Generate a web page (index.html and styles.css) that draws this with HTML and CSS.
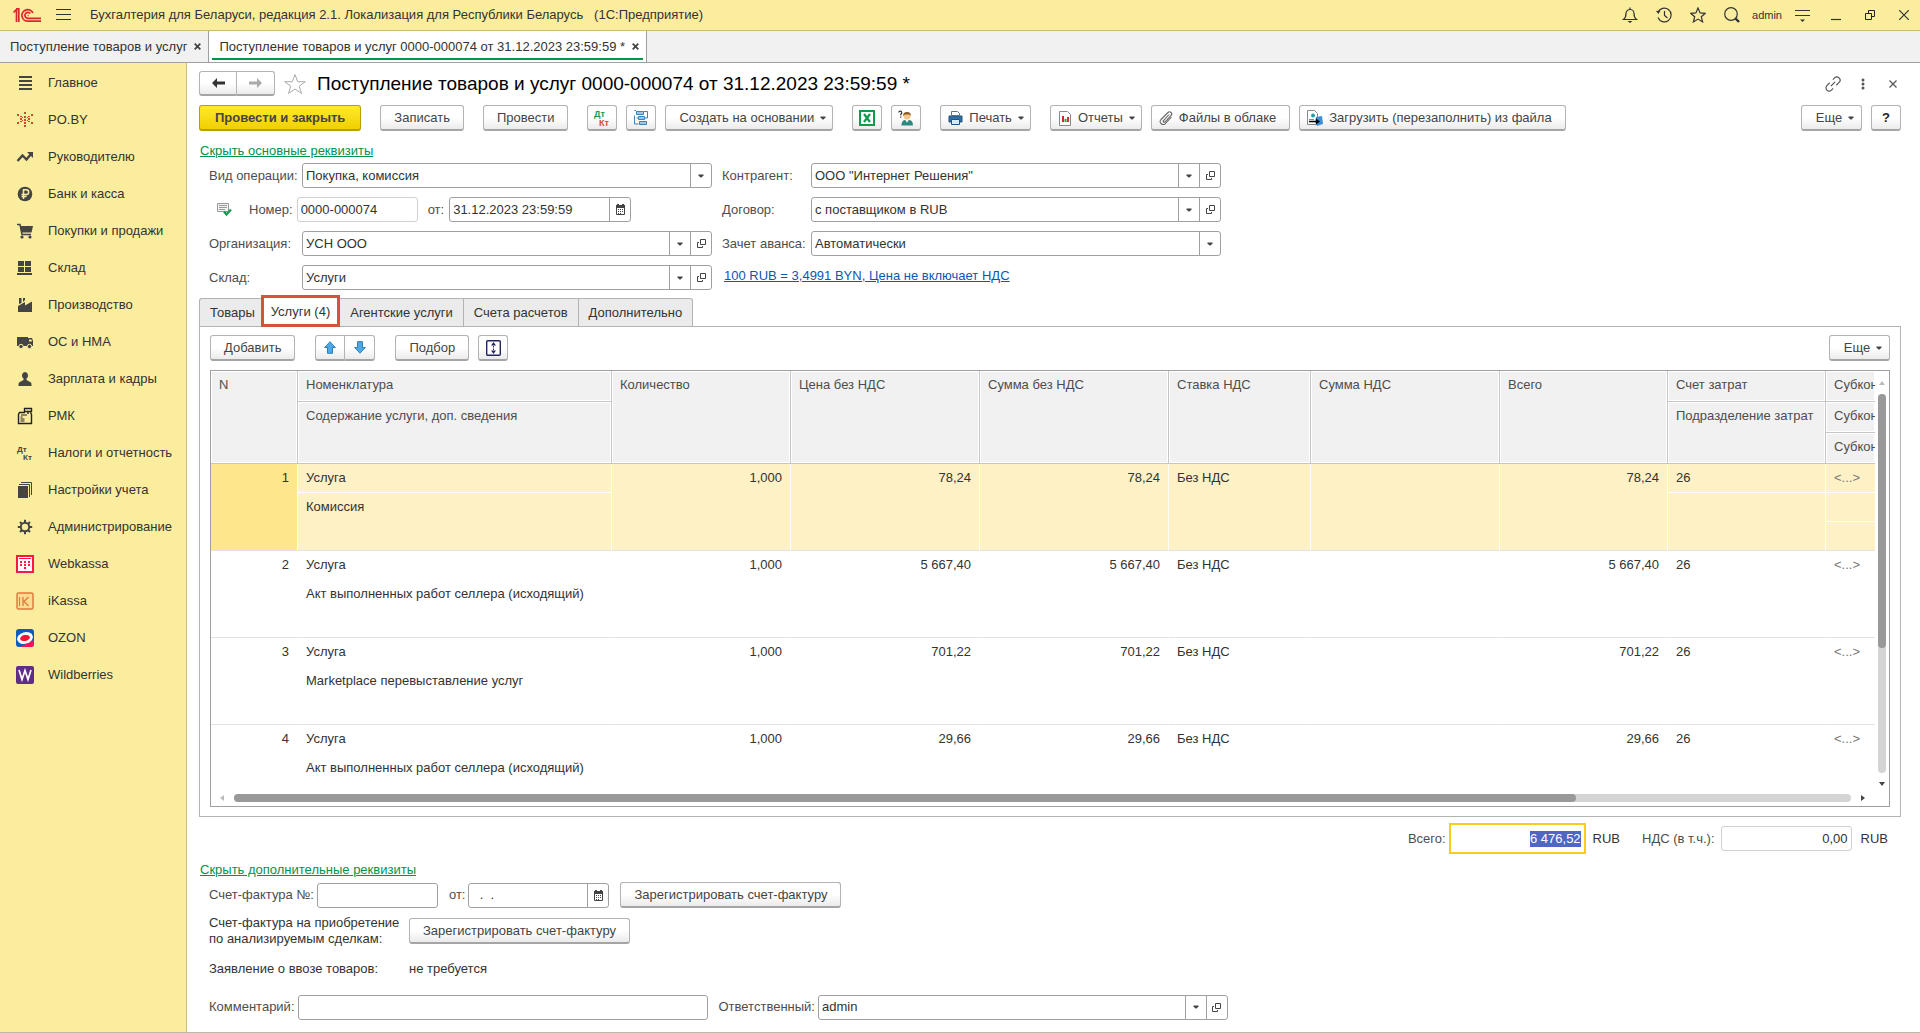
FILE: index.html
```html
<!DOCTYPE html>
<html lang="ru">
<head>
<meta charset="utf-8">
<title>Поступление товаров и услуг 0000-000074</title>
<link rel="stylesheet" href="styles.css">
</head>
<body>
<svg class="defs" width="0" height="0" aria-hidden="true">
  <symbol id="caret" viewBox="0 0 6 4"><path d="M.5.500h5v1L3.500 3.500h-1L.5 1.500z" fill="#444"/></symbol>
  <symbol id="open" viewBox="0 0 9 9"><path d="M3.500.5h5v5h-5zM2 3.500H.5v5h5V7" fill="none" stroke="#444"/></symbol>
  <symbol id="calendar" viewBox="0 0 9 11"><path d="M.5 2.500h8v8h-8z" fill="#fff" stroke="#444"/><path d="M0 1h9v3H0zM1 0h2v1H1zM6 0h2v1H6zM2 5h1v1H2zM4 5h1v1H4zM6 5h1v1H6zM2 7h1v1H2zM4 7h1v1H4zM6 7h1v1H6zM2 9h1v1H2zM4 9h1v1H4z" fill="#444"/></symbol>
  <symbol id="cross" viewBox="0 0 7 7"><path d="M.7.7l5.600 5.600M6.300.7L.7 6.300" stroke="#444" stroke-width="1.800"/></symbol>
</svg>

<header class="titlebar">
  <svg class="logo" width="28" height="15" viewBox="0 0 28 15" fill="none" stroke="#d9262e" stroke-width="1.700"><path d="M.5 4.500L3.500 1.500V14M5.800 14V.9L3 .9M20 5A5.800 5.800 0 1 0 14.500 13.200H28M17.300 5.500A3 3 0 1 0 14.500 10.300H28M14.600 7.500h1"/></svg>
  <button class="flat" aria-label="Меню"><svg width="15" height="12" viewBox="0 0 15 12"><path d="M0 .5h15M0 5.500h15M0 10.500h15" stroke="#333"/></svg></button>
  <span class="app-name">Бухгалтерия для Беларуси, редакция 2.1. Локализация для Республики Беларусь &nbsp; (1С:Предприятие)</span>
  <div class="sys">
    <button class="flat" aria-label="Уведомления"><svg width="16" height="16" viewBox="0 0 16 16" fill="none" stroke="#333" stroke-width="1.200"><path d="M1.500 12.500c2-1.500 2.500-3 2.500-6a4 4 0 0 1 8 0c0 3 .5 4.500 2.500 6zM8 2.500V.5"/><path d="M5.500 14h5L8 16z" fill="#333" stroke="none"/></svg></button>
    <button class="flat" aria-label="История"><svg width="16" height="16" viewBox="0 0 16 16" fill="none" stroke="#333" stroke-width="1.200"><path d="M2 5.500a6.800 6.800 0 1 1 0 5M8.500 4v4.500l3 2.500"/><path d="M0 4l4.500-.5L2.500 7z" fill="#333" stroke="none"/></svg></button>
    <button class="flat" aria-label="Избранное"><svg width="16" height="16" viewBox="0 0 16 16" fill="none" stroke="#333" stroke-width="1.200"><path d="M8 1l2.100 4.900 5.200.4-4 3.400 1.300 5.200L8 12.100l-4.600 2.800 1.300-5.200-4-3.400 5.200-.4z"/></svg></button>
    <button class="flat" aria-label="Поиск"><svg width="16" height="16" viewBox="0 0 16 16" fill="none" stroke="#333"><circle cx="7" cy="7" r="6.300" stroke-width="1.200"/><path d="M11.500 11.500l3.500 3.500" stroke-width="2.400"/></svg></button>
    <span class="user">admin</span>
    <button class="flat" aria-label="Настройки"><svg width="15" height="13" viewBox="0 0 15 13"><path d="M0 1.500h15M0 6.500h15" stroke="#333" stroke-width="1.200"/><path d="M5 10.500h5L7.500 13z" fill="#333"/></svg></button>
    <button class="flat" aria-label="Свернуть"><svg width="10" height="12" viewBox="0 0 10 12"><path d="M0 10.500h10" stroke="#333" stroke-width="1.200"/></svg></button>
    <button class="flat" aria-label="Восстановить"><svg width="10" height="10" viewBox="0 0 10 10" fill="none" stroke="#222"><path d="M.5 3.500h6v6h-6zM3.500 3V.5h6v6H7"/></svg></button>
    <button class="flat" aria-label="Закрыть"><svg width="10" height="10" viewBox="0 0 10 10"><path d="M0 0l10 10M10 0L0 10" stroke="#333" stroke-width="1.200"/></svg></button>
  </div>
</header>

<nav class="windows">
  <div class="win"><a href="#list">Поступление товаров и услуг</a><button class="flat" aria-label="Закрыть вкладку"><svg width="7" height="7"><use href="#cross"/></svg></button></div>
  <div class="win current"><a href="#doc">Поступление товаров и услуг 0000-000074 от 31.12.2023 23:59:59 *</a><button class="flat" aria-label="Закрыть вкладку"><svg width="7" height="7"><use href="#cross"/></svg></button></div>
</nav>

<div class="workspace">
  <nav class="sidebar">
    <a href="#main"><svg width="18" height="18" viewBox="0 0 18 18"><path d="M3 3h13M3 7h13M3 11h13M3 15h13" stroke="#444" stroke-width="2"/></svg>Главное</a>
    <a href="#po"><svg width="18" height="18" viewBox="0 0 18 18" fill="#d9442f"><path d="M8 1h2v2H8zM8 5h2v2H8zM8 8h2v2H8zM8 11h2v2H8zM8 14h2v2H8zM1 3h2v2H1zM15 3h2v2h-2zM1 11h2v2H1zM15 11h2v2h-2zM4 5h2v1H4zM12 5h2v1h-2zM4 7h2v2H4zM12 7h2v2h-2zM4 10h2v1H4zM12 10h2v1h-2zM6 6h1v1H6zM11 6h1v1h-1zM6 9h1v1H6zM11 9h1v1h-1z"/></svg>PO.BY</a>
    <a href="#head"><svg width="18" height="18" viewBox="0 0 18 18"><path d="M1.500 13l5-5.500 4 4L15 6" fill="none" stroke="#444" stroke-width="2.400"/><path d="M11 4h6v6z" fill="#444"/></svg>Руководителю</a>
    <a href="#bank"><svg width="18" height="18" viewBox="0 0 18 18"><circle cx="9" cy="9" r="7.300" fill="#444"/><path d="M7.500 14V4.800h2.800a2.300 2.300 0 0 1 0 4.700H5.500M5.500 11.500h5" fill="none" stroke="#fbed9e" stroke-width="1.500"/></svg>Банк и касса</a>
    <a href="#buy"><svg width="18" height="18" viewBox="0 0 18 18"><path d="M1 2.500h3l2 10h9" fill="none" stroke="#444" stroke-width="1.500"/><path d="M4 4h13l-1.500 6.500H5.500z" fill="#444"/><circle cx="6" cy="15" r="1.600" fill="#444"/><circle cx="14" cy="15" r="1.600" fill="#444"/></svg>Покупки и продажи</a>
    <a href="#store"><svg width="18" height="18" viewBox="0 0 18 18" fill="#444"><path d="M2 2h6v5H2zM9 2h6v5H9zM2 8h6v5H2zM9 8h6v5H9zM1 14h15v2H1z"/></svg>Склад</a>
    <a href="#prod"><svg width="18" height="18" viewBox="0 0 18 18" fill="#444"><path d="M2 16v-6l7-4v3.500l7-4V16zM3 2h2.500v5L3 8zM7 2h2v2L7 6z"/></svg>Производство</a>
    <a href="#os"><svg width="18" height="18" viewBox="0 0 18 18" fill="#444"><path d="M1 4h11v9H1zM12 5h4l1 3v5h-5z"/><path d="M13 6.500h2.500l.5 2h-3z" fill="#fbed9e"/><circle cx="5" cy="13.500" r="2.200" stroke="#fbed9e"/><circle cx="13.500" cy="13.500" r="2.200" stroke="#fbed9e"/></svg>ОС и НМА</a>
    <a href="#salary"><svg width="18" height="18" viewBox="0 0 18 18" fill="#444"><path d="M9 2a3.200 3.500 0 0 1 1.500 6.500v1.500l4.500 2.500c.5 1 .5 2 .5 3.500h-13c0-1.500 0-2.500.5-3.500L7.500 10V8.500A3.200 3.500 0 0 1 9 2z"/></svg>Зарплата и кадры</a>
    <a href="#rmk"><svg width="18" height="18" viewBox="0 0 18 18" fill="none" stroke="#222" stroke-width="1.400"><path d="M9 5.500H3.500l-1 2v9h13V7.500l-1-2M8.500 1.500h7v3h-7zM12 4v3"/><path d="M4.500 10h2M4.500 12h4M4.500 14h4M5 8h6" stroke-width="1.200"/></svg>РМК</a>
    <a href="#tax"><svg width="18" height="18" viewBox="0 0 18 18" fill="#444" font-family="Liberation Sans, sans-serif" font-weight="bold" font-size="8"><text x="1" y="8">Дт</text><text x="7" y="16">Кт</text></svg>Налоги и отчетность</a>
    <a href="#setup"><svg width="18" height="18" viewBox="0 0 18 18"><path d="M2 5h10v12H2z" fill="#444"/><path d="M3 3.500h10.500V16M5 1.500h10.500V14" fill="none" stroke="#444"/></svg>Настройки учета</a>
    <a href="#admin"><svg width="18" height="18" viewBox="0 0 18 18" fill="none" stroke="#444"><circle cx="9" cy="9" r="4.200" stroke-width="2"/><path d="M9 1.800v3M9 13.200v3M1.800 9h3M13.200 9h3M4 4l2 2M12 12l2 2M14 4l-2 2M6 12l-2 2" stroke-width="2"/></svg>Администрирование</a>
    <a href="#webkassa"><svg width="18" height="18" viewBox="0 0 18 18"><rect x="1" y="1" width="16" height="16" fill="#fff" stroke="#ff1744" stroke-width="2"/><path d="M3 3h12v1H3zM4 6h2v2H4zM8 6h2v2H8zM12 6h2v2h-2zM4 9h2v2H4zM8 9h2v2H8zM12 9h2v2h-2zM8 12h2v2H8z" fill="#ff1744"/></svg>Webkassa</a>
    <a href="#ikassa"><svg width="18" height="18" viewBox="0 0 18 18" fill="none" stroke="#e07b3c"><rect x="1" y="1" width="16" height="16" rx="1.500" fill="#fbdc90" stroke-width="1.500"/><path d="M3.500 5v9" stroke-width="1"/><path d="M7 5v9M12.500 5L8 9.500l4.500 4.500" stroke-width="1.300"/></svg>iKassa</a>
    <a href="#ozon"><svg width="18" height="18" viewBox="0 0 18 18"><rect width="18" height="18" rx="3" fill="#0b5cc0"/><path d="M18 11v4a3 3 0 0 1-3 3H4z" fill="#f91155"/><ellipse cx="9" cy="9" rx="8" ry="5.800" fill="#fff" transform="rotate(-15 9 9)"/><ellipse cx="9" cy="9" rx="5" ry="3" fill="#f91136" transform="rotate(-12 9 9)"/></svg>OZON</a>
    <a href="#wb"><svg width="18" height="18" viewBox="0 0 18 18"><rect width="18" height="18" rx="2" fill="#5f2c86"/><path d="M3 4l3 9.500L9 4.500l3 9L15 4" fill="none" stroke="#fff" stroke-width="1.700"/></svg>Wildberries</a>
  </nav>

  <main class="doc">
    <div class="doc-head">
      <div class="group">
        <button class="btn half" aria-label="Назад"><svg width="13" height="10" viewBox="0 0 13 10"><path d="M0 5l5-5v3.500h8v3H5V10z" fill="#333"/></svg></button><button class="btn half" aria-label="Вперед"><svg width="13" height="10" viewBox="0 0 13 10"><path d="M13 5L8 0v3.500H0v3h8V10z" fill="#aaa"/></svg></button>
      </div>
      <button class="flat" aria-label="В избранное"><svg width="24" height="22" viewBox="0 0 24 22"><path d="M12 1.500l2.700 7.200h7.600l-6.100 4.500 2.300 7.200-6.500-4.400-6.500 4.400 2.300-7.200-6.100-4.500h7.600z" fill="#fff" stroke="#aaa"/></svg></button>
      <h1>Поступление товаров и услуг 0000-000074 от 31.12.2023 23:59:59 *</h1>
      <div class="head-tools">
        <button class="flat" aria-label="Ссылка"><svg width="16" height="16" viewBox="0 0 16 16" fill="none" stroke="#555" stroke-width="1.200"><g transform="rotate(-45 8 8)"><path d="M6.500 4.800H2.600a3.200 3.200 0 0 0 0 6.400H5M9.500 11.200h3.900a3.200 3.200 0 0 0 0-6.400H11M5 8h6"/></g></svg></button>
        <button class="flat" aria-label="Действия"><svg width="4" height="12" viewBox="0 0 4 12" fill="#555"><circle cx="2" cy="2" r="1.500"/><circle cx="2" cy="6" r="1.500"/><circle cx="2" cy="10" r="1.500"/></svg></button>
        <button class="flat" aria-label="Закрыть"><svg width="8" height="8" viewBox="0 0 8 8"><path d="M.5.5l7 7M7.500.5l-7 7" stroke="#555" stroke-width="1.200"/></svg></button>
      </div>
    </div>

    <div class="toolbar">
      <button class="btn primary">Провести и закрыть</button>
      <button class="btn">Записать</button>
      <button class="btn">Провести</button>
      <div class="cluster">
        <button class="btn square" aria-label="Дебет и кредит"><svg width="18" height="18" viewBox="0 0 18 18" font-family="Liberation Sans, sans-serif" font-weight="bold" font-size="9"><text x="1" y="8" fill="#159a4b">Дт</text><text x="6" y="17" fill="#d2502f">Кт</text></svg></button>
        <button class="btn square" aria-label="Структура подчиненности"><svg width="16" height="16" viewBox="0 0 16 16" fill="#9cc6e4" stroke="#3f82b4"><path d="M3.500 1.500h7v3h-7zM5.500 6.500h6v3h-6zM6.500 11.500h7v3h-7z"/><path d="M3 .5H1.500M11 1.500h3.500v6.500H12M1.500 5.500v8.500h4M3.500 8h2" fill="none"/></svg></button>
        <button class="btn menu">Создать на основании<svg class="caret" width="6" height="4"><use href="#caret"/></svg></button>
      </div>
      <div class="cluster">
        <button class="btn square" aria-label="Excel"><svg width="16" height="16" viewBox="0 0 16 16"><rect x="1" y="1" width="14" height="14" fill="#fff" stroke="#0f9b4c" stroke-width="2"/><path d="M5 4l6 8M11 4l-6 8" stroke="#0f9b4c" stroke-width="2.200"/></svg></button>
        <button class="btn square" aria-label="Помощник"><svg width="16" height="16" viewBox="0 0 16 16"><path d="M.8 2.500a1.500 1.500 0 1 1 2 1.500v1.500M2.800 6.500v1.200" fill="none" stroke="#333" stroke-width="1.200"/><circle cx="9" cy="6" r="3.500" fill="#f3c48b"/><path d="M5 6a4 4 0 0 1 8 0l-1.500-1.500H7z" fill="#8a5a1d"/><path d="M3.500 15.500c0-4 2-5.500 3.500-5.500l2 2 2-2c2 0 4 1.500 4 5.500z" fill="#2d8a80"/><path d="M8 10h2l-1 3z" fill="#fff"/></svg></button>
      </div>
      <button class="btn menu icon"><svg width="15" height="14" viewBox="0 0 15 14"><path d="M1 5h13v6H1z" fill="#2f6ea8" stroke="#23527e"/><path d="M3.500 4.500V.5h6l2 2v2z" fill="#fff" stroke="#5b7388"/><path d="M3.500 8.500h8v5h-8z" fill="#dbe8f3" stroke="#23527e"/></svg>Печать<svg class="caret" width="6" height="4"><use href="#caret"/></svg></button>
      <div class="cluster">
        <button class="btn menu icon"><svg width="14" height="15" viewBox="0 0 14 15"><path d="M1.500.5h8l3 3v11h-11z" fill="#fff" stroke="#888"/><path d="M4 5h2v6H4z" fill="#d22"/><path d="M6.500 8h2v3h-2z" fill="#2a4"/><path d="M9 6h2v5H9z" fill="#c33"/></svg>Отчеты<svg class="caret" width="6" height="4"><use href="#caret"/></svg></button>
        <button class="btn icon"><svg width="14" height="14" viewBox="0 0 14 14" fill="none" stroke="#666" stroke-width="1.100"><path d="M10 3.500L4.500 9.500a1 1 0 0 0 1.500 1.500L12 4.500a2 2 0 0 0-3-3L2 8.500a3 3 0 0 0 4.500 4L12.500 6"/></svg>Файлы в облаке</button>
        <button class="btn icon"><svg width="16" height="16" viewBox="0 0 16 16"><path d="M.5.5h7l3 3v11H.5z" fill="#fff" stroke="#888"/><circle cx="6" cy="5.500" r="2" fill="#1fa0a8"/><path d="M2 9h5v1H2z" fill="#888"/><path d="M9 7l6-1 1 8-6 2-2-4z" fill="#3d8fd6"/><path d="M2 11.500h8" stroke="#000" stroke-width="1.500"/><path d="M9 8.500l4 3-4 3z" fill="#000"/></svg>Загрузить (перезаполнить) из файла</button>
      </div>
      <div class="cluster end">
        <button class="btn menu more">Еще<svg class="caret" width="6" height="4"><use href="#caret"/></svg></button>
        <button class="btn square help">?</button>
      </div>
    </div>

    <a class="toggle" href="#requisites">Скрыть основные реквизиты</a>

    <section class="form">
      <label for="op">Вид операции:</label>
      <div class="field"><select id="op"><option>Покупка, комиссия</option></select><span class="side"><svg width="6" height="4"><use href="#caret"/></svg></span></div>
      <label for="partner" class="second">Контрагент:</label>
      <div class="field"><input id="partner" value="ООО &quot;Интернет Решения&quot;"><button class="side" aria-label="Выбрать"><svg width="6" height="4"><use href="#caret"/></svg></button><button class="side" aria-label="Открыть"><svg width="9" height="9"><use href="#open"/></svg></button></div>

      <div class="number-row">
        <svg width="15" height="13" viewBox="0 0 15 13"><path d="M.5.5h11v8H.5z" fill="#f3f3f3" stroke="#999"/><path d="M2 2.500h8M2 4.500h8M2 6.500h6" stroke="#999"/><path d="M7 8.500l2.500 3L14 6.500" fill="none" stroke="#159a4b" stroke-width="2.200"/></svg>
        <label for="num">Номер:</label>
        <div class="field pale num"><input id="num" value="0000-000074"></div>
        <label for="date">от:</label>
        <div class="field date"><input id="date" value="31.12.2023 23:59:59"><button class="side" aria-label="Календарь"><svg width="9" height="11"><use href="#calendar"/></svg></button></div>
      </div>
      <label for="contract" class="second">Договор:</label>
      <div class="field"><input id="contract" value="с поставщиком в RUB"><button class="side" aria-label="Выбрать"><svg width="6" height="4"><use href="#caret"/></svg></button><button class="side" aria-label="Открыть"><svg width="9" height="9"><use href="#open"/></svg></button></div>

      <label for="org">Организация:</label>
      <div class="field"><input id="org" value="УСН ООО"><button class="side" aria-label="Выбрать"><svg width="6" height="4"><use href="#caret"/></svg></button><button class="side" aria-label="Открыть"><svg width="9" height="9"><use href="#open"/></svg></button></div>
      <label for="advance" class="second">Зачет аванса:</label>
      <div class="field"><select id="advance"><option>Автоматически</option></select><span class="side"><svg width="6" height="4"><use href="#caret"/></svg></span></div>

      <label for="wh">Склад:</label>
      <div class="field"><input id="wh" value="Услуги"><button class="side" aria-label="Выбрать"><svg width="6" height="4"><use href="#caret"/></svg></button><button class="side" aria-label="Открыть"><svg width="9" height="9"><use href="#open"/></svg></button></div>
      <a class="rate" href="#rate">100 RUB = 3,4991 BYN, Цена не включает НДС</a>
    </section>

    <div class="tabs" role="tablist">
      <button role="tab">Товары</button>
      <button role="tab" class="active" aria-selected="true">Услуги (4)</button>
      <button role="tab">Агентские услуги</button>
      <button role="tab">Счета расчетов</button>
      <button role="tab">Дополнительно</button>
    </div>

    <section class="panel">
      <div class="panel-tools">
        <button class="btn">Добавить</button>
        <div class="group">
          <button class="btn half narrow" aria-label="Вверх"><svg width="12" height="13" viewBox="0 0 12 13"><path d="M6 .7l5.300 5.800H8.500v5.800h-5V6.500H.7z" fill="#4fa9e6" stroke="#2d7fb8"/></svg></button><button class="btn half narrow" aria-label="Вниз"><svg width="12" height="13" viewBox="0 0 12 13"><path d="M6 12.300L.7 6.500h2.800V.7h5v5.800h2.800z" fill="#4fa9e6" stroke="#2d7fb8"/></svg></button>
        </div>
        <div class="cluster">
          <button class="btn">Подбор</button>
          <button class="btn square" aria-label="Высота строк"><svg width="15" height="16" viewBox="0 0 15 16"><rect x=".7" y=".7" width="13.600" height="14.600" rx="1" fill="#fff" stroke="#22265c" stroke-width="1.400"/><path d="M7.500 2L10 5.500H5zM7.500 14L10 10.500H5zM7 6h1v1H7zM7 7.500h1v1H7zM7 9h1v1H7z" fill="#22265c"/></svg></button>
        </div>
        <button class="btn menu more end">Еще<svg class="caret" width="6" height="4"><use href="#caret"/></svg></button>
      </div>

      <div class="grid">
        <div class="viewport">
          <table>
            <colgroup><col class="c-n"><col class="c-name"><col class="c-qty"><col class="c-price"><col class="c-price"><col class="c-rate"><col class="c-vat"><col class="c-total"><col class="c-acc"><col></colgroup>
            <thead>
              <tr><th rowspan="3">N</th><th>Номенклатура</th><th rowspan="3">Количество</th><th rowspan="3">Цена без НДС</th><th rowspan="3">Сумма без НДС</th><th rowspan="3">Ставка НДС</th><th rowspan="3">Сумма НДС</th><th rowspan="3">Всего</th><th>Счет затрат</th><th>Субконто</th></tr>
              <tr><th rowspan="2">Содержание услуги, доп. сведения</th><th rowspan="2">Подразделение затрат</th><th>Субконто</th></tr>
              <tr><th>Субконто</th></tr>
            </thead>
            <tbody class="selected">
              <tr><td rowspan="3" class="r cur">1</td><td>Услуга</td><td rowspan="3" class="r">1,000</td><td rowspan="3" class="r">78,24</td><td rowspan="3" class="r">78,24</td><td rowspan="3">Без НДС</td><td rowspan="3"></td><td rowspan="3" class="r">78,24</td><td>26</td><td class="dim">&lt;...&gt;</td></tr>
              <tr><td rowspan="2">Комиссия</td><td rowspan="2"></td><td></td></tr>
              <tr><td></td></tr>
            </tbody>
            <tbody>
              <tr><td rowspan="3" class="r">2</td><td>Услуга</td><td rowspan="3" class="r">1,000</td><td rowspan="3" class="r">5 667,40</td><td rowspan="3" class="r">5 667,40</td><td rowspan="3">Без НДС</td><td rowspan="3"></td><td rowspan="3" class="r">5 667,40</td><td>26</td><td class="dim">&lt;...&gt;</td></tr>
              <tr><td rowspan="2">Акт выполненных работ селлера (исходящий)</td><td rowspan="2"></td><td></td></tr>
              <tr><td></td></tr>
            </tbody>
            <tbody>
              <tr><td rowspan="3" class="r">3</td><td>Услуга</td><td rowspan="3" class="r">1,000</td><td rowspan="3" class="r">701,22</td><td rowspan="3" class="r">701,22</td><td rowspan="3">Без НДС</td><td rowspan="3"></td><td rowspan="3" class="r">701,22</td><td>26</td><td class="dim">&lt;...&gt;</td></tr>
              <tr><td rowspan="2">Marketplace перевыставление услуг</td><td rowspan="2"></td><td></td></tr>
              <tr><td></td></tr>
            </tbody>
            <tbody>
              <tr><td rowspan="3" class="r">4</td><td>Услуга</td><td rowspan="3" class="r">1,000</td><td rowspan="3" class="r">29,66</td><td rowspan="3" class="r">29,66</td><td rowspan="3">Без НДС</td><td rowspan="3"></td><td rowspan="3" class="r">29,66</td><td>26</td><td class="dim">&lt;...&gt;</td></tr>
              <tr><td rowspan="2">Акт выполненных работ селлера (исходящий)</td><td rowspan="2"></td><td></td></tr>
              <tr><td></td></tr>
            </tbody>
          </table>
        </div>
        <div class="vscroll">
          <svg width="6" height="4" viewBox="0 0 6 4"><path d="M0 4h6L3 0z" fill="#bbb"/></svg>
          <div class="track"><div class="thumb"></div></div>
          <svg width="6" height="4" viewBox="0 0 6 4"><path d="M0 0h6L3 4z" fill="#444"/></svg>
        </div>
        <div class="hscroll">
          <svg width="4" height="6" viewBox="0 0 4 6"><path d="M4 0v6L0 3z" fill="#bbb"/></svg>
          <div class="track"><div class="thumb"></div></div>
          <svg width="4" height="6" viewBox="0 0 4 6"><path d="M0 0v6l4-3z" fill="#444"/></svg>
        </div>
      </div>
    </section>

    <div class="totals">
      <label for="total">Всего:</label>
      <div class="field focus"><input id="total" class="r" value="6 476,52" autofocus></div>
      <span>RUB</span>
      <label for="vat" class="vat">НДС (в т.ч.):</label>
      <div class="field pale sum"><input id="vat" class="r" value="0,00"></div>
      <span>RUB</span>
    </div>

    <a class="toggle" href="#extra">Скрыть дополнительные реквизиты</a>

    <div class="line invoice">
      <label for="inv">Счет-фактура №:</label>
      <div class="field num"><input id="inv"></div>
      <label for="invdate" class="from">от:</label>
      <div class="field invdate"><input id="invdate" value="  .  ."><button class="side" aria-label="Календарь"><svg width="9" height="11"><use href="#calendar"/></svg></button></div>
      <button class="btn register">Зарегистрировать счет-фактуру</button>
    </div>
    <div class="line">
      <span class="wide">Счет-фактура на приобретение<br>по анализируемым сделкам:</span>
      <button class="btn">Зарегистрировать счет-фактуру</button>
    </div>
    <div class="line import">
      <span class="wide">Заявление о ввозе товаров:</span>
      <span>не требуется</span>
    </div>
    <div class="line last">
      <label for="comment">Комментарий:</label>
      <div class="field big"><input id="comment"></div>
      <label for="resp" class="from">Ответственный:</label>
      <div class="field big"><input id="resp" value="admin"><button class="side" aria-label="Выбрать"><svg width="6" height="4"><use href="#caret"/></svg></button><button class="side" aria-label="Открыть"><svg width="9" height="9"><use href="#open"/></svg></button></div>
    </div>
  </main>
</div>
<script src="focus.js"></script>
</body>
</html>
```
FILE: focus.js
```js
// The total is ready for editing as soon as the document opens.
const total = document.getElementById('total');
total.focus();
total.select();
```
FILE: styles.css
```css
* { box-sizing: border-box; }

body {
  margin: 0;
  height: 100vh;
  display: flex;
  flex-direction: column;
  font: 13px/16px "Liberation Sans", Arial, sans-serif;
  color: #333;
  background: #fff;
  border-bottom: 1px solid #c4b5ab;
}

button, input, select { font: inherit; color: inherit; }
svg { display: block; flex: none; }
.defs { position: absolute; }

.flat {
  border: 0;
  padding: 0;
  background: none;
  display: flex;
  align-items: center;
  justify-content: center;
}

/* Title bar */
.titlebar {
  flex: none;
  height: 31px;
  padding: 0 0 0 13px;
  display: flex;
  align-items: center;
  background: #fbed9e;
  border-bottom: 1px solid #cdbb6c;
}
.logo { margin-right: 15px; }
.app-name { margin-left: 19px; white-space: nowrap; }
.sys { margin-left: auto; display: flex; align-items: center; gap: 2px; }
.sys .flat { width: 32px; height: 30px; }
.user { width: 34px; font-size: 11px; text-align: center; }

/* Open windows */
.windows {
  flex: none;
  height: 32px;
  display: flex;
  background: #f1f1f1;
  border-bottom: 1px solid #a0a0a0;
}
.win {
  display: flex;
  align-items: center;
  gap: 7px;
  padding: 0 7px 0 10px;
  border-right: 1px solid #a0a0a0;
}
.win a { color: inherit; text-decoration: none; white-space: nowrap; }
.win.current {
  background: linear-gradient(#009846, #009846) center bottom 2px / calc(100% - 6px) 2px no-repeat #fff;
}

.workspace { flex: 1; min-height: 0; display: flex; }

/* Sections */
.sidebar {
  flex: none;
  width: 187px;
  padding-top: 1px;
  background: #fbed9e;
  border-right: 1px solid #cbbd7c;
}
.sidebar a {
  display: flex;
  align-items: center;
  gap: 14px;
  height: 37px;
  padding-left: 16px;
  color: #333;
  text-decoration: none;
  white-space: nowrap;
}

/* Document */
.doc {
  flex: 1;
  min-width: 0;
  display: flex;
  flex-direction: column;
  padding: 8px 19px 12px 12px;
}

.btn {
  display: flex;
  align-items: center;
  justify-content: center;
  height: 26px;
  padding: 1px 13px 0;
  border: 1px solid #b3b3b3;
  border-bottom: 2px solid #a5a5a5;
  border-radius: 3px;
  background: linear-gradient(#fff 50%, #ebebeb);
  color: #444;
  white-space: nowrap;
}
.btn.primary {
  padding: 1px 15px 0;
  border-color: #b9a000;
  background: linear-gradient(#ffea2e, #f0d000);
  font-weight: bold;
}
.btn.square { width: 30px; padding: 0; }
.btn.menu { padding-right: 6px; }
.btn.icon { padding-left: 7px; gap: 6px; }
.btn .caret { margin-left: 6px; }
.btn.icon .caret { margin-left: 0; }
.btn.more { min-width: 61px; }
.btn.help { color: #222; font-weight: bold; }
.btn.half { width: 38px; height: 25px; padding: 0; }
.btn.half.narrow { width: 30px; height: 26px; }
.group { display: flex; }
.group .btn:first-child { border-radius: 3px 0 0 3px; }
.group .btn:last-child { border-left: 0; border-radius: 0 3px 3px 0; }
.cluster { display: flex; gap: 9px; }
.end { margin-left: auto; }

.doc-head { flex: none; display: flex; align-items: center; height: 25px; margin-bottom: 9px; }
.doc-head > .flat { margin-left: 8px; }
.doc-head h1 { margin: 0 0 0 10px; font-size: 19px; line-height: 24px; font-weight: normal; color: #000; white-space: nowrap; }
.head-tools { margin-left: auto; display: flex; gap: 14px; }
.head-tools .flat { width: 16px; }

.toolbar { flex: none; display: flex; gap: 19px; }

.toggle { align-self: flex-start; color: #00934a; }
.doc > .toggle { margin: 12px 0 4px 1px; }

.form {
  flex: none;
  display: grid;
  grid-template-columns: 93px 410px 99px 410px;
  row-gap: 9px;
  padding-left: 10px;
  align-items: center;
}
.form .second { padding-left: 10px; }
label { color: #4d4d4d; white-space: nowrap; }

.field {
  display: flex;
  height: 25px;
  border: 1px solid #a0a0a0;
  border-radius: 3px;
  background: #fff;
  min-width: 0;
}
.field input, .field select {
  flex: 1;
  min-width: 0;
  width: 0;
  border: 0;
  padding: 0 3px;
  background: none;
  outline: 0;
  appearance: none;
}
.field .side {
  flex: none;
  display: flex;
  align-items: center;
  justify-content: center;
  width: 21px;
  padding: 0;
  border: 0;
  border-left: 1px solid #a0a0a0;
  background: none;
}
.field.pale { border-color: #d0d0d0; }
.field input.r { text-align: right; }

.number-row { grid-column: span 2; display: flex; align-items: center; padding-left: 8px; }
.number-row svg + label { margin-left: 17px; margin-right: 4px; }
.number-row .num + label { margin-left: 10px; margin-right: 5px; }
.num { width: 121px; }
.date { width: 182px; }
.rate { grid-column: span 2; margin-left: 12px; padding-bottom: 3px; color: #0f55b5; }

/* Tabs */
.tabs { flex: none; display: flex; margin-top: 8px; }
.tabs button {
  height: 28px;
  padding: 0 10px;
  border: 1px solid #b3b3b3;
  border-bottom: 0;
  border-right-width: 0;
  background: #ebebeb;
}
.tabs button:first-child { border-radius: 3px 0 0 0; }
.tabs button:last-child { border-right-width: 1px; border-radius: 0 3px 0 0; }
.tabs .active {
  height: 32px;
  margin: -3px 0 -1px -4px;
  padding: 1px 7px 0;
  border: 3px solid #d9503f;
  background: #fff;
  z-index: 1;
}
.tabs .active + button { border-left: 0; }

.panel {
  flex: 1;
  min-height: 200px;
  display: flex;
  flex-direction: column;
  gap: 9px;
  padding: 8px 10px 9px;
  border: 1px solid #b3b3b3;
}
.panel-tools { display: flex; gap: 20px; }

.grid {
  flex: 1;
  min-height: 0;
  display: grid;
  grid-template: minmax(0, 1fr) 16px / minmax(0, 1fr) 14px;
  border: 1px solid #a0a0a0;
}
.viewport { overflow: hidden; }

table { width: 100%; table-layout: fixed; border-collapse: separate; border-spacing: 0; }
.c-n { width: 87px; }
.c-name { width: 314px; }
.c-qty { width: 179px; }
.c-price { width: 189px; }
.c-rate { width: 142px; }
.c-vat { width: 189px; }
.c-total { width: 168px; }
.c-acc { width: 158px; }

th, td {
  padding: 6px 8px 0;
  text-align: left;
  vertical-align: top;
  font-weight: normal;
  white-space: nowrap;
  overflow: hidden;
}
th {
  height: 31px;
  background: #f1f1f1;
  color: #4d4d4d;
  border-right: 1px solid #c6c6c6;
  border-bottom: 1px solid #c6c6c6;
  box-shadow: inset 0 0 0 1px #fff;
}
td { height: 29px; border-right: 1px solid #fff; border-bottom: 1px solid #fff; }
th:last-child, td:last-child { padding-right: 0; border-right: 0; }
tbody tr:last-child td, td[rowspan] { border-bottom-color: #e2e2e2; }
.selected td { background: #fef1c6; }
.selected td.cur { background: #fde68c; }
td.r { text-align: right; }
td.dim { color: #777; }

.track { flex: 1; border-radius: 4px; background: #d4d4d4; }
.thumb { border-radius: 4px; background: #999; }
.vscroll { display: flex; flex-direction: column; align-items: center; gap: 9px; padding: 10px 0 4px; }
.vscroll .track { width: 8px; }
.vscroll .thumb { height: 67%; }
.hscroll { display: flex; align-items: center; gap: 10px; padding: 0 10px 0 9px; }
.hscroll .track { height: 8px; }
.hscroll .thumb { width: 83%; height: 8px; }

.totals { flex: none; display: flex; align-items: center; justify-content: flex-end; height: 31px; margin-top: 6px; padding-right: 13px; }
.totals .focus { width: 137px; height: 31px; margin: 0 7px 0 3px; border: 2px solid #fccb1f; border-radius: 0; }
.totals .vat { margin-left: 22px; }
.totals .sum { width: 131px; margin: 0 9px 0 6px; }
.totals ::selection { background: #4f66c2; color: #fff; }

.totals + .toggle { margin-top: 8px; margin-bottom: 4px; }

.line { flex: none; display: flex; align-items: center; min-height: 26px; padding-left: 10px; margin-bottom: 9px; }
.line .field { margin-left: 3px; }
.line .from { margin-left: 11px; }
.line .invdate { width: 141px; }
.line .register { margin-left: 11px; }
.line .wide { width: 200px; }
.line.invoice { margin-bottom: 7px; }
.line.import { margin-bottom: 12px; }
.line.last { margin-bottom: 0; }
.line .big { width: 410px; }
```
